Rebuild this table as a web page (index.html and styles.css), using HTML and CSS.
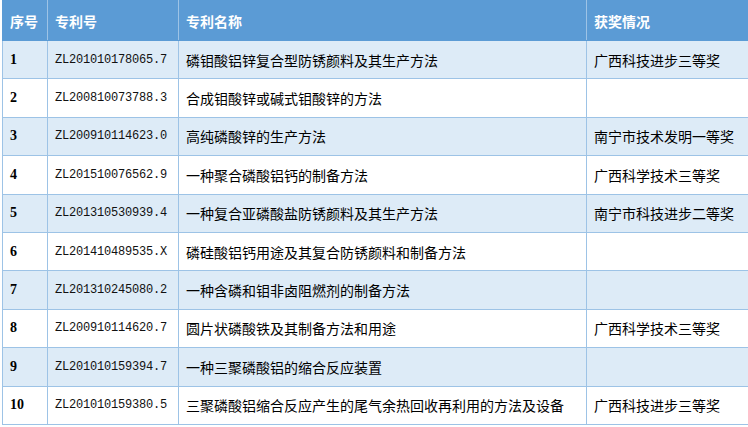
FILE: index.html
```html
<!DOCTYPE html>
<html lang="zh">
<head>
<meta charset="utf-8">
<link rel="stylesheet" href="styles.css">
</head>
<body>
<table class="patents">
  <colgroup>
    <col class="c-no">
    <col class="c-id">
    <col class="c-name">
    <col class="c-award">
  </colgroup>
  <thead>
    <tr><th>序号</th><th>专利号</th><th>专利名称</th><th>获奖情况</th></tr>
  </thead>
  <tbody>
    <tr class="alt"><td class="no">1</td><td class="id">ZL201010178065.7</td><td>磷钼酸铝锌复合型防锈颜料及其生产方法</td><td>广西科技进步三等奖</td></tr>
    <tr><td class="no">2</td><td class="id">ZL200810073788.3</td><td>合成钼酸锌或碱式钼酸锌的方法</td><td></td></tr>
    <tr class="alt"><td class="no">3</td><td class="id">ZL200910114623.0</td><td>高纯磷酸锌的生产方法</td><td>南宁市技术发明一等奖</td></tr>
    <tr><td class="no">4</td><td class="id">ZL201510076562.9</td><td>一种聚合磷酸铝钙的制备方法</td><td>广西科学技术三等奖</td></tr>
    <tr class="alt"><td class="no">5</td><td class="id">ZL201310530939.4</td><td>一种复合亚磷酸盐防锈颜料及其生产方法</td><td>南宁市科技进步二等奖</td></tr>
    <tr><td class="no">6</td><td class="id">ZL201410489535.X</td><td>磷硅酸铝钙用途及其复合防锈颜料和制备方法</td><td></td></tr>
    <tr class="alt"><td class="no">7</td><td class="id">ZL201310245080.2</td><td>一种含磷和钼非卤阻燃剂的制备方法</td><td></td></tr>
    <tr><td class="no">8</td><td class="id">ZL200910114620.7</td><td>圆片状磷酸铁及其制备方法和用途</td><td>广西科学技术三等奖</td></tr>
    <tr class="alt"><td class="no">9</td><td class="id">ZL201010159394.7</td><td>一种三聚磷酸铝的缩合反应装置</td><td></td></tr>
    <tr><td class="no">10</td><td class="id">ZL201010159380.5</td><td>三聚磷酸铝缩合反应产生的尾气余热回收再利用的方法及设备</td><td>广西科技进步三等奖</td></tr>
  </tbody>
</table>
</body>
</html>
```

FILE: styles.css
```css
html, body {
  margin: 0;
  padding: 0;
  background: #ffffff;
}
body {
  font-family: "Noto Sans CJK SC", "Noto Sans", sans-serif;
  font-size: 14px;
  color: #000;
}
.patents {
  border-collapse: collapse;
  table-layout: fixed;
  width: 746px;
  margin-left: 2px;
}
.c-no { width: 45px; }
.c-id { width: 131px; }
.c-name { width: 408px; }
.c-award { width: 162px; }
.patents th {
  background: #5b9bd5;
  color: #ffffff;
  font-weight: 700;
  text-align: left;
  height: 39px;
  padding: 0 0 0 7px;
  border: 1px solid #5b9bd5;
  border-left-color: #9dc3e6;
  border-right-color: #9dc3e6;
  font-size: 14px;
  line-height: 1;
}
.patents th:first-child { border-left-color: #5b9bd5; }
.patents th:last-child { border-right-color: #5b9bd5; }
.patents td {
  border: 1px solid #9dc3e6;
  height: 37.4px;
  padding: 0 0 0 7px;
  line-height: 1;
  white-space: nowrap;
}
.patents tr.alt td {
  background: #ddebf7;
}
.patents td.no {
  font-family: "Liberation Serif", serif;
  font-weight: 700;
  font-size: 14px;
}
.patents td.id {
  font-family: "Liberation Mono", monospace;
  font-size: 12px;
  letter-spacing: -0.2px;
  color: #111;
}
```
